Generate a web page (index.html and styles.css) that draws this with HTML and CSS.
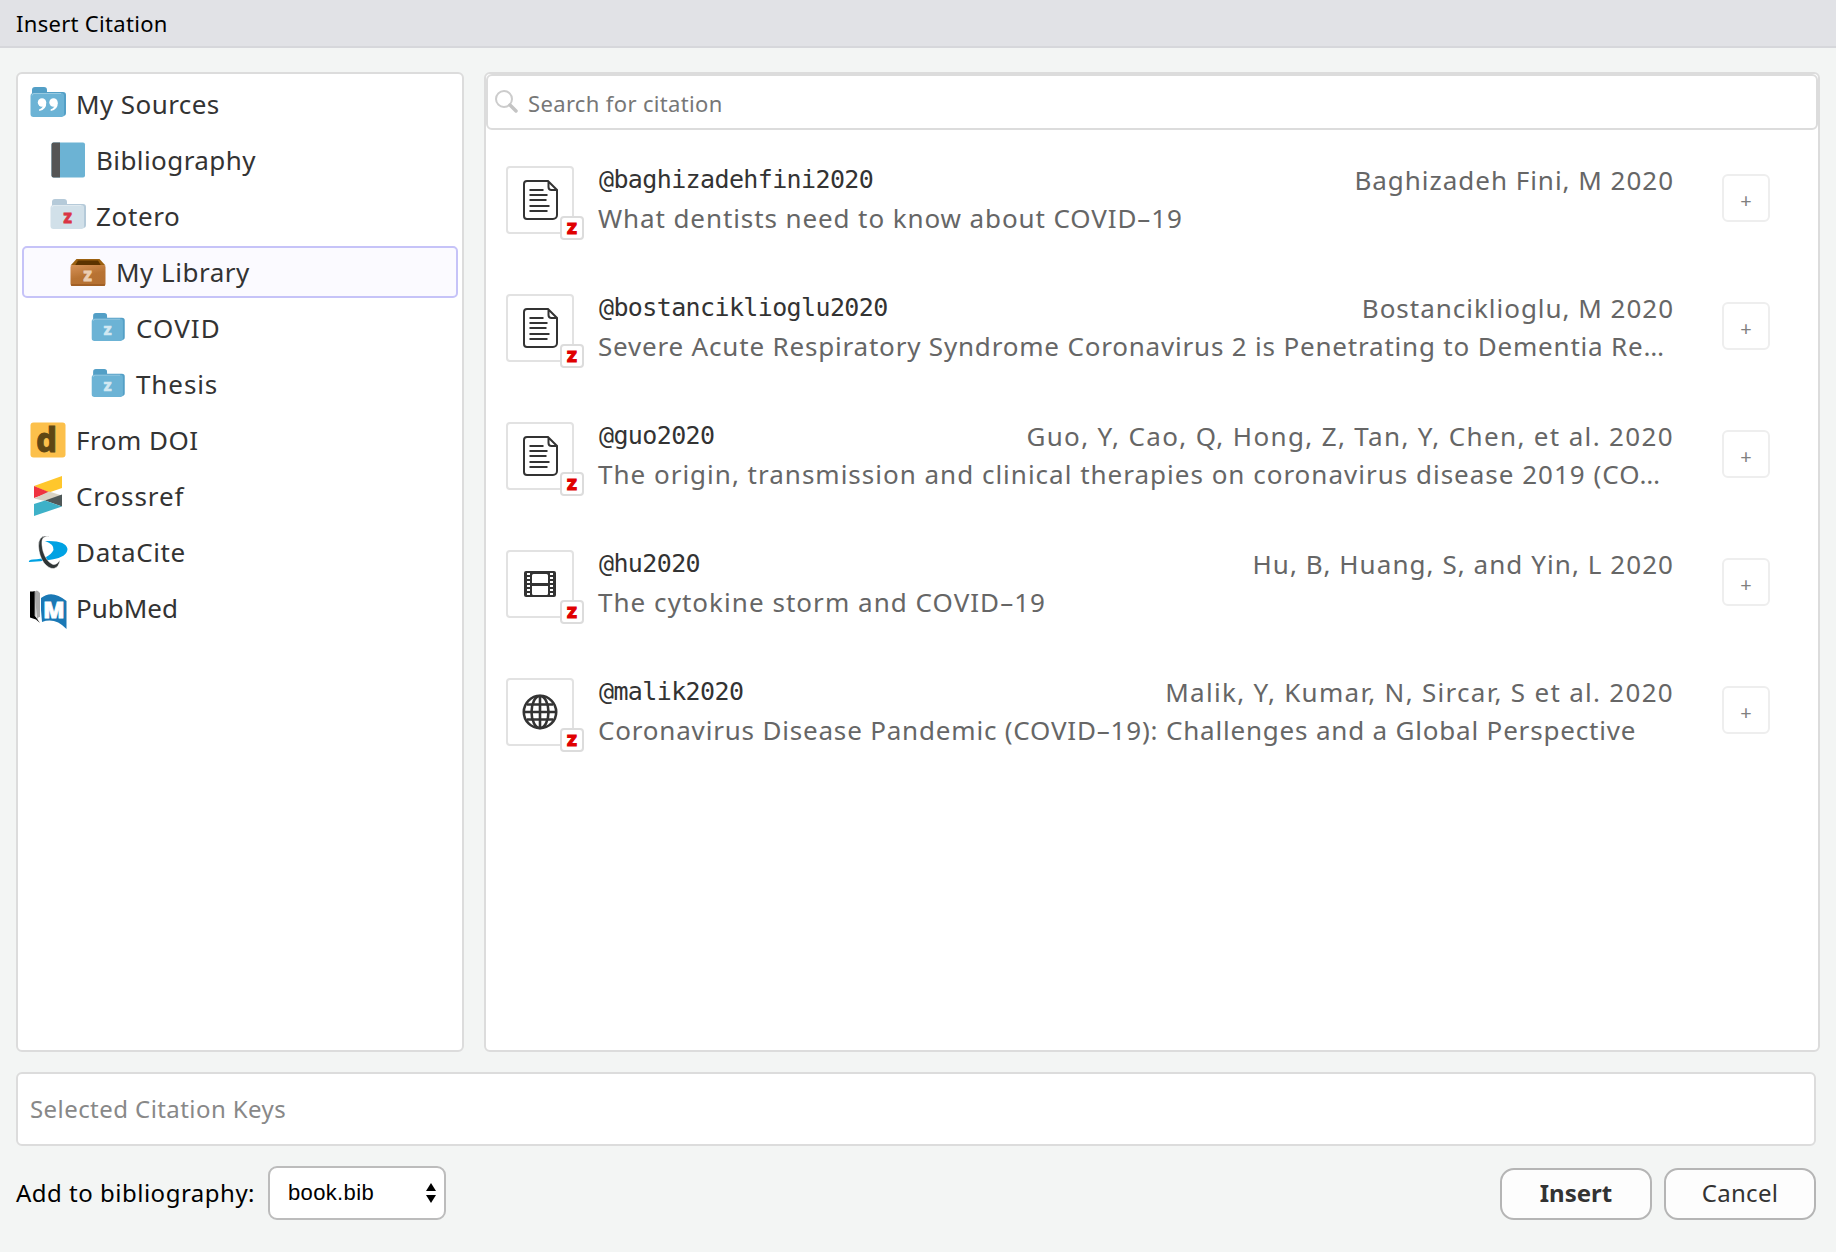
FILE: index.html
```html
<!DOCTYPE html>
<html lang="en">
<head>
<meta charset="utf-8">
<title>Insert Citation</title>
<link rel="stylesheet" href="styles.css">
</head>
<body>
<svg class="defs" width="0" height="0" aria-hidden="true">
  <defs>
    <symbol id="folder" viewBox="0 0 40 40">
      <path d="M4 33V7a3 3 0 0 1 3-3h9a3 3 0 0 1 3 3V9h16a3 3 0 0 1 3 3V30a3 3 0 0 1-3 3z" fill="var(--back)"/>
      <path d="M2.500 13a3 3 0 0 1 3-3h28a2.500 2.500 0 0 1 2.500 2.500v19a2.500 2.500 0 0 1-2.500 2.500H5.500A3 3 0 0 1 2.500 31z" fill="var(--front)"/>
      <path d="M4 12.500Q4 10.500 6 10.500h27" fill="none" stroke="#fff" stroke-opacity=".3"/>
    </symbol>
    <symbol id="article" viewBox="0 0 36 42">
      <path d="M5 2h21l9 9v25a4 4 0 0 1-4 4H5a3 3 0 0 1-3-3V5a3 3 0 0 1 3-3z M26.500 2v6a3 3 0 0 0 3 3h5.500 M7.500 11h14 M7.500 16h18 M7.500 21h17 M7.500 27h20 M7.500 32h18" fill="none" stroke="#333" stroke-width="2"/>
    </symbol>
  </defs>
</svg>

<header class="titlebar"><h1 class="titlebar-text">Insert Citation</h1></header>

<main class="dialog">
  <div class="panels">
    <nav class="tree">
      <div class="node level-0">
        <svg class="node-icon blue" viewBox="0 0 40 40"><use href="#folder"/><g fill="#fff"><circle cx="14" cy="19.500" r="4.200"/><path d="M18.200 19.500q.5 7-7 8.500v-1.700q3.500-1 3.800-4z"/><circle cx="25.500" cy="19.500" r="4.200"/><path d="M29.700 19.500q.5 7-7 8.500v-1.700q3.500-1 3.800-4z"/></g></svg>
        <span class="t-sources">My Sources</span>
      </div>
      <div class="node level-1">
        <svg class="node-icon" viewBox="0 0 40 40"><rect x="3.500" y="2.500" width="33.500" height="35" rx="2" fill="#6cb3d4"/><path d="M12 2.500H5.500a2 2 0 0 0-2 2v31a2 2 0 0 0 2 2H12z" fill="#555"/></svg>
        <span class="t-bibliography">Bibliography</span>
      </div>
      <div class="node level-1">
        <svg class="node-icon pale" viewBox="0 0 40 40"><use href="#folder"/><text class="glyph-z red" x="19.500" y="27.500">Z</text></svg>
        <span class="t-zotero">Zotero</span>
      </div>
      <div class="node level-2 selected">
        <svg class="node-icon" viewBox="0 0 40 40">
          <defs><linearGradient id="box" x2=".4" y2="1"><stop stop-color="#d79258"/><stop offset=".6" stop-color="#b87333"/><stop offset="1" stop-color="#b57032"/></linearGradient></defs>
          <path d="M8.500 7h23l6 6.500h-35z" fill="#9b6010"/><path d="M10 8.500h20l3 5H7z" fill="#5c3300"/>
          <rect x="2.500" y="13" width="35" height="21" rx="2" fill="url(#box)"/><path d="M3 33h34" stroke="#9b5a22" stroke-width="1.500"/>
          <text class="glyph-z tan" x="19.500" y="28.500">Z</text></svg>
        <span class="t-library">My Library</span>
      </div>
      <div class="node level-3">
        <svg class="node-icon blue" viewBox="-1.500 -1.500 43 43"><use href="#folder" width="40" height="40"/><text class="glyph-z light" x="19.500" y="27.500">Z</text></svg>
        <span class="t-covid">COVID</span>
      </div>
      <div class="node level-3">
        <svg class="node-icon blue" viewBox="-1.500 -1.500 43 43"><use href="#folder" width="40" height="40"/><text class="glyph-z light" x="19.500" y="27.500">Z</text></svg>
        <span class="t-thesis">Thesis</span>
      </div>
      <div class="node level-0">
        <svg class="node-icon" viewBox="0 0 40 40"><rect x="2.500" y="2.500" width="35" height="35" rx="3" fill="#fcc04b"/><text class="glyph-d" x="18.500" y="32">d</text></svg>
        <span class="t-doi">From DOI</span>
      </div>
      <div class="node level-0">
        <svg class="node-icon" viewBox="0 0 40 40"><path d="M6 10 34 0v12l-13 4.500z" fill="#ffc72c"/><path d="M6 10v12l16-5.500z" fill="#ef3340"/><path d="M21 15.500l13 4-17 5.500-11-2.500z" fill="#d8d2c4"/><path d="M34 18.500v12L17 24.500z" fill="#4f5858"/><path d="M6 28 17 24.500l17 6L6 40z" fill="#3eb1c8"/></svg>
        <span class="t-crossref">Crossref</span>
      </div>
      <div class="node level-0">
        <svg class="node-icon" viewBox="0 0 40 40"><path d="M17 9Q38 8 39.500 17 39 25 24 27.500 12 29.500 1 30 0 28 5 27.500 21 27 25.500 18 26 12 17 9z" fill="#00a2e3"/><path d="M21 4.500Q10.500 2 10.500 14 11 24 16 31 21 37 26 36.500 31 35 32 28 28 34 24 32 18 29 15 19 12 6 17 5 19 4 21 5z" fill="#303536" stroke="#fff" stroke-width=".5"/></svg>
        <span class="t-datacite">DataCite</span>
      </div>
      <div class="node level-0">
        <svg class="node-icon" viewBox="0 0 40 40"><path d="M7 5Q8 0 12 5v24q-3 0-3 5z" fill="#aaa"/><path d="M2 3.500q3 0 5-.5v25l5 7-4-3.500-6-2z"/><path d="M13 10Q24 1 38.500 13v28Q27 29 14 34q-1.500-12-1-24z" fill="#1a78b5"/><path d="M7 3v25" stroke="#888"/><text class="glyph-m" x="26" y="30">M</text></svg>
        <span class="t-pubmed">PubMed</span>
      </div>
    </nav>

    <section class="results">
      <div class="search">
        <svg class="search-icon" viewBox="0 0 26 26"><circle cx="10" cy="10" r="8" fill="none" stroke="#ccc" stroke-width="2"/><path d="M16 16l6 6" stroke="#c4c4c4" stroke-width="3.500" stroke-linecap="round"/></svg>
        <span class="search-text">Search for citation</span>
      </div>

      <article class="item">
        <div class="thumb"><svg class="article-icon"><use href="#article"/></svg><span class="badge">Z</span></div>
        <div class="info"><div class="line"><span class="key">@baghizadehfini2020</span><span class="authors a1">Baghizadeh Fini, M 2020</span></div><div class="title t1">What dentists need to know about COVID–19</div></div>
        <button class="add">+</button>
      </article>
      <article class="item">
        <div class="thumb"><svg class="article-icon"><use href="#article"/></svg><span class="badge">Z</span></div>
        <div class="info"><div class="line"><span class="key">@bostanciklioglu2020</span><span class="authors a2">Bostanciklioglu, M 2020</span></div><div class="title t2">Severe Acute Respiratory Syndrome Coronavirus 2 is Penetrating to Dementia Re…</div></div>
        <button class="add">+</button>
      </article>
      <article class="item">
        <div class="thumb"><svg class="article-icon"><use href="#article"/></svg><span class="badge">Z</span></div>
        <div class="info"><div class="line"><span class="key">@guo2020</span><span class="authors a3">Guo, Y, Cao, Q, Hong, Z, Tan, Y, Chen, et al. 2020</span></div><div class="title t3">The origin, transmission and clinical therapies on coronavirus disease 2019 (CO…</div></div>
        <button class="add">+</button>
      </article>
      <article class="item">
        <div class="thumb"><svg class="film-icon" viewBox="0 0 32 26"><rect width="32" height="26" rx="2" fill="#333"/><path d="M8 4.500A1.500 1.500 0 0 1 9.500 3h13A1.500 1.500 0 0 1 24 4.500V12H8z M8 15h16v7.500a1.500 1.500 0 0 1-1.500 1.500h-13A1.500 1.500 0 0 1 8 22.500z M3 2h3v2H3z M3 6h3v2H3z M3 10h3v2H3z M3 14h3v2H3z M3 18h3v2H3z M3 22h3v2H3z M26 2h3v2h-3z M26 6h3v2h-3z M26 10h3v2h-3z M26 14h3v2h-3z M26 18h3v2h-3z M26 22h3v2h-3z" fill="#fff"/></svg><span class="badge">Z</span></div>
        <div class="info"><div class="line"><span class="key">@hu2020</span><span class="authors a4">Hu, B, Huang, S, and Yin, L 2020</span></div><div class="title t4">The cytokine storm and COVID–19</div></div>
        <button class="add">+</button>
      </article>
      <article class="item">
        <div class="thumb"><svg class="globe-icon" viewBox="0 0 36 36"><g fill="none" stroke="#333" stroke-width="2.600"><circle cx="18" cy="18" r="16.200"/><ellipse cx="18" cy="18" rx="8.500" ry="16"/><path d="M18 2v32M2 18h32M5 10.500h26M5 25.500h26"/></g></svg><span class="badge">Z</span></div>
        <div class="info"><div class="line"><span class="key">@malik2020</span><span class="authors a5">Malik, Y, Kumar, N, Sircar, S et al. 2020</span></div><div class="title t5">Coronavirus Disease Pandemic (COVID–19): Challenges and a Global Perspective</div></div>
        <button class="add">+</button>
      </article>
    </section>
  </div>

  <div class="selected-keys"><span class="keys-text">Selected Citation Keys</span></div>

  <footer class="footer">
    <span class="footer-label">Add to bibliography:</span>
    <div class="select"><span>book.bib</span><svg class="select-arrows" viewBox="0 0 10 20"><path d="M5 0l5 8H0z M5 20l5-8H0z"/></svg></div>
    <div class="actions">
      <button class="button primary">Insert</button>
      <button class="button">Cancel</button>
    </div>
  </footer>
</main>
</body>
</html>
```
FILE: styles.css
```css
* { box-sizing: border-box; }
body {
  margin: 0;
  height: 1252px;
  display: flex;
  flex-direction: column;
  background: #f3f5f4;
  color: #333;
  font-family: "Noto Sans", "Open Sans", sans-serif;
  font-size: 26px;
  line-height: 1;
  white-space: nowrap;
  overflow: hidden;
}
.defs { position: absolute; }
.titlebar {
  height: 48px;
  padding: 0 16px;
  display: flex;
  align-items: center;
  background: #e1e2e6;
  border-bottom: 2px solid #d6d7db;
}
.titlebar-text { margin: 0; font-size: 22px; font-weight: 400; line-height: 30px; color: #000; letter-spacing: .3px; }
.dialog { flex: 1; padding: 24px 16px 0; display: flex; flex-direction: column; gap: 20px; }
.panels { display: flex; gap: 20px; height: 980px; }

.tree, .results, .selected-keys { background: #fff; border: 2px solid #dcdcdc; border-radius: 6px; }
.tree { width: 448px; padding: 4px 4px; display: flex; flex-direction: column; gap: 4px; }
.node { height: 52px; display: flex; align-items: center; gap: 8px; border: 2px solid transparent; border-radius: 5px; padding-left: 4px; line-height: 36px; }
.level-1 { padding-left: 24px; }
.level-2 { padding-left: 44px; }
.level-3 { padding-left: 64px; }
.selected { background: #fbfaff; border-color: #c6c3f8; }
.node-icon { width: 40px; height: 40px; flex: none; overflow: visible; }
.level-0 .blue, .pale { margin-top: -2px; }
.blue { --front: #6cb3d5; --back: #539fc6; }
.pale { --front: #d1e0e9; --back: #b5cad9; }
.glyph-z { font-family: "Open Sans", sans-serif; font-size: 13.5px; font-weight: 800; text-anchor: middle; stroke-width: .8px; }
.red { fill: #da3444; stroke: #da3444; }
.tan { fill: #ebcdb2; stroke: #ebcdb2; }
.light { fill: #d2e8f2; stroke: #d2e8f2; }
.glyph-d { font-size: 33px; font-weight: 800; text-anchor: middle; fill: #5f4714; stroke: #5f4714; stroke-width: .8px; }
.glyph-m { font-family: "Open Sans", sans-serif; font-size: 22px; font-weight: 800; text-anchor: middle; fill: #fff; stroke: #fff; stroke-width: .8px; }

.t-sources, .t-bibliography { letter-spacing: .42px; }
.t-zotero, .t-datacite { letter-spacing: .65px; }
.t-library, .t-doi { letter-spacing: .5px; }
.t-covid { letter-spacing: 1.1px; }
.t-thesis, .t-crossref { letter-spacing: .9px; }

.results { width: 1336px; flex: none; }
.search { height: 56px; border: 2px solid #dcdcdc; border-radius: 6px; margin-bottom: 36px; padding-left: 6px; display: flex; align-items: center; gap: 8px; }
.search-icon { width: 26px; height: 26px; }
.search-text { font-size: 22px; color: #777; line-height: 30px; letter-spacing: .35px; padding-top: 2px; }

.item { height: 128px; padding-left: 20px; display: flex; align-items: flex-start; }
.thumb { position: relative; width: 68px; height: 68px; border: 2px solid #e2e2e2; border-radius: 4px; display: flex; align-items: center; justify-content: center; }
.article-icon { width: 36px; height: 42px; }
.film-icon { width: 32px; height: 26px; }
.globe-icon { width: 36px; height: 36px; }
.badge { position: absolute; left: 52px; top: 48px; width: 24px; height: 24px; border: 2px solid #dcdcdc; border-radius: 4px; background: #fff; color: #e00000; font: 800 16px/20px "Open Sans", sans-serif; text-align: center; -webkit-text-stroke: 1px #e00000; }
.info { width: 1076px; margin: -1px 0 0 24px; color: #666; }
.line { height: 38px; display: flex; justify-content: space-between; line-height: 30px; }
.key { font-family: "DejaVu Sans Mono", monospace; font-size: 25px; letter-spacing: -.62px; color: #333; padding-left: 1px; }
.authors, .title { line-height: 30px; }
.a1, .a2 { letter-spacing: .98px; }
.a3 { letter-spacing: 1.35px; }
.a4 { letter-spacing: 1.06px; }
.a5 { letter-spacing: 1.29px; }
.t1 { letter-spacing: .9px; }
.t2, .t5 { letter-spacing: .81px; }
.t3 { letter-spacing: 1px; }
.t4 { letter-spacing: 1.04px; }
.add { width: 48px; height: 48px; margin: 8px 0 0 48px; padding: 6px 0 0; border: 2px solid #eee; border-radius: 6px; background: #fff; color: #808080; font: 20px/20px "Noto Sans", sans-serif; }

.selected-keys { height: 74px; width: 1800px; padding: 0 12px; display: flex; align-items: center; }
.keys-text { font-size: 24px; color: #888; line-height: 34px; letter-spacing: .43px; }

.footer { height: 54px; display: flex; align-items: center; color: #000; font-size: 24px; }
.footer-label { width: 252px; line-height: 34px; letter-spacing: .5px; }
.select { width: 178px; height: 54px; border: 2px solid #bcbcbc; border-radius: 9px; background: #fff; padding: 0 8px 0 18px; display: flex; align-items: center; justify-content: space-between; font: 22px/26px "Liberation Sans", Arial, sans-serif; letter-spacing: .35px; }
.select-arrows { width: 10px; height: 20px; }
.actions { margin: 2px 4px 0 auto; display: flex; gap: 12px; }
.button { width: 152px; height: 52px; padding: 0 0 2px; border: 2px solid #b5b5b5; border-radius: 14px; background: #fdfdfd; color: #333; font: 24px/34px "Noto Sans", sans-serif; letter-spacing: .3px; }
.primary { font-weight: 700; letter-spacing: 0; }
```
